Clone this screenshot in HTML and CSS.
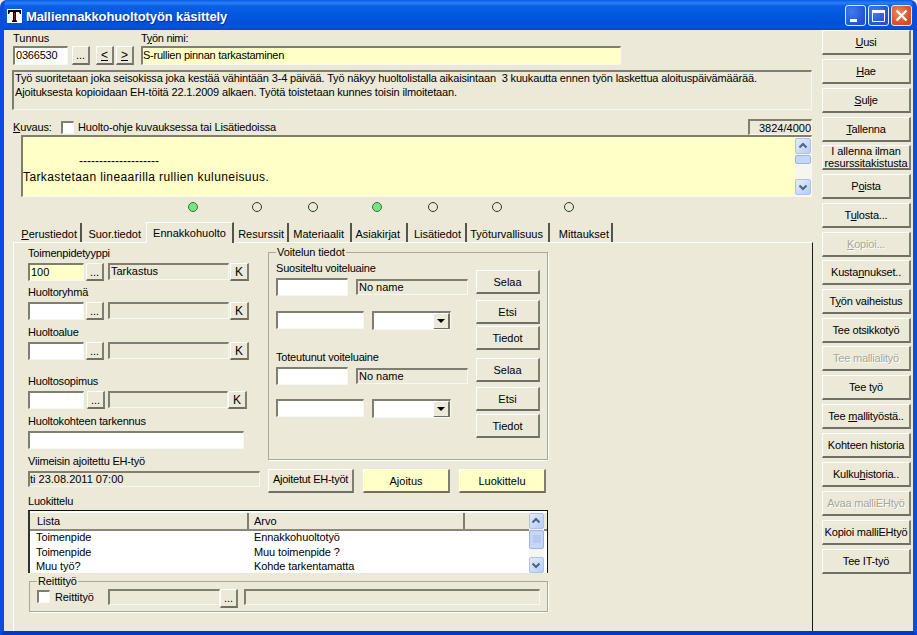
FILE: index.html
```html
<!DOCTYPE html>
<html lang="fi">
<head>
<meta charset="utf-8">
<title>Malliennakkohuoltotyön käsittely</title>
<link rel="stylesheet" href="styles.css">
</head>
<body>
<div class="window">
  <header class="titlebar">
    <svg class="appicon" width="15" height="14" viewBox="0 0 15 14"><rect width="15" height="14" fill="#fff"/><path d="M1 1h13v4h-1l-1-2H9v8l1 1v1H5v-1l1-1V3H3L2 5H1z" fill="#000"/><path d="M7 4h1v7H7z" fill="#8a1a1a"/></svg>
    <span class="title">Malliennakkohuoltotyön käsittely</span>
    <div class="winbtns">
      <span class="wb wb-blue"><svg width="21" height="21" viewBox="0 0 21 21"><rect x="5" y="14" width="7" height="3" fill="#fff"/></svg></span>
      <span class="wb wb-blue"><svg width="21" height="21" viewBox="0 0 21 21"><path d="M4.5 5.5h12v11h-12z" fill="none" stroke="#fff"/><rect x="4" y="5" width="13" height="3" fill="#fff"/></svg></span>
      <span class="wb wb-red"><svg width="21" height="21" viewBox="0 0 21 21"><path d="M5.5 5.5l10 10M15.500 5.500l-10 10" stroke="#fff" stroke-width="2.400" fill="none"/></svg></span>
    </div>
  </header>
  <div class="client">
    <main class="main">
      <section class="top">
        <div class="idlabels"><span class="lab-id">Tunnus</span><span class="lab-name">T<u>y</u>ön nimi:</span></div>
        <div class="idrow">
          <span class="field w-tunnus">0366530</span>
          <span class="btn b-dots">...</span>
          <span class="btn b-nav b-prev"><u>&lt;</u></span>
          <span class="btn b-nav"><u>&gt;</u></span>
          <span class="field yellow w-name">S-rullien pinnan tarkastaminen</span>
        </div>
        <div class="field desc"><div class="desctext">Työ suoritetaan joka seisokissa joka kestää vähintään 3-4 päivää. Työ näkyy huoltolistalla aikaisintaan&nbsp; 3 kuukautta ennen työn laskettua aloituspäivämäärää.<br>Ajoituksesta kopioidaan EH-töitä 22.1.2009 alkaen. Työtä toistetaan kunnes toisin ilmoitetaan.</div></div>
        <div class="kuvrow">
          <span class="kuvlab"><u>K</u>uvaus:</span>
          <span class="check"></span>
          <span class="kuvcheck">Huolto-ohje kuvauksessa tai Lisätiedoissa</span>
          <span class="field counter">3824/4000</span>
        </div>
        <div class="field yellow memo">
          <div class="memotext">
            <div class="dashes">--------------------</div>
            <div>Tarkastetaan lineaarilla rullien kuluneisuus.</div>
          </div>
          <div class="sb">
            <span class="sbb"><svg width="16" height="16" viewBox="0 0 16 16"><path d="M4.500 9.500L8 6l3.500 3.500" stroke="#4d6185" stroke-width="2" fill="none"/></svg></span>
            <span class="sbthumb short"></span>
            <span class="sbtrack"></span>
            <span class="sbb"><svg width="16" height="16" viewBox="0 0 16 16"><path d="M4.500 6.500L8 10l3.500-3.500" stroke="#4d6185" stroke-width="2" fill="none"/></svg></span>
          </div>
        </div>
        <div class="dots">
          <span class="dot on"></span><span class="dot"></span><span class="dot"></span><span class="dot on"></span><span class="dot"></span><span class="dot"></span><span class="dot"></span>
        </div>
      </section>
      <nav class="tabs">
        <span class="tab t1"><u>P</u>erustiedot</span>
        <span class="tab t2">Suor.tiedot</span>
        <span class="tab active t3">Ennakkohuolto</span>
        <span class="tab t4">Resurssit</span>
        <span class="tab t5">Materiaalit</span>
        <span class="tab t6">Asiakirjat</span>
        <span class="tab t7">Lisätiedot</span>
        <span class="tab t8">Työturvallisuus</span>
        <span class="tab t9">Mittaukset</span>
      </nav>
      <section class="panel">
        <div class="panelcols">
          <div class="leftcol">
            <div class="lab">Toimenpidetyyppi</div>
            <div class="frow">
              <span class="field yellow w-code">100</span><span class="btn b-pick">...</span><span class="field w-ro">Tarkastus</span><span class="btn b-k">K</span>
            </div>
            <div class="lab g2">Huoltoryhmä</div>
            <div class="frow">
              <span class="field white w-code"></span><span class="btn b-pick">...</span><span class="field w-ro"></span><span class="btn b-k">K</span>
            </div>
            <div class="lab g2b">Huoltoalue</div>
            <div class="frow">
              <span class="field white w-code"></span><span class="btn b-pick">...</span><span class="field w-ro"></span><span class="btn b-k">K</span>
            </div>
            <div class="lab g3">Huoltosopimus</div>
            <div class="frow shifted">
              <span class="field white w-code"></span><span class="btn b-pick">...</span><span class="field w-ro2"></span><span class="btn b-k">K</span>
            </div>
            <div class="lab g4">Huoltokohteen tarkennus</div>
            <span class="field white w-spec"></span>
            <div class="lab g5">Viimeisin ajoitettu EH-työ</div>
            <span class="field w-last">ti 23.08.2011 07:00</span>
          </div>
          <div class="rightcol">
            <fieldset class="group voitelu">
              <legend>Voitelun tiedot</legend>
              <div class="lubes">
                <div class="lube">
                  <div class="lab">Suositeltu voiteluaine</div>
                  <div class="lrow1"><span class="field white w-lcode"></span><span class="field w-lname">No name</span></div>
                  <div class="lrow2"><span class="field white w-lqty"></span><span class="field white combo"><span class="cbtn"><svg width="8" height="4" viewBox="0 0 8 4"><path d="M0 0h8L4 4z" fill="#000"/></svg></span></span></div>
                </div>
                <div class="lbtns">
                  <span class="btn b-l">Selaa</span><span class="btn b-l b-etsi">Etsi</span><span class="btn b-l b-tied">Tiedot</span>
                </div>
              </div>
              <div class="lubes second">
                <div class="lube">
                  <div class="lab">Toteutunut voiteluaine</div>
                  <div class="lrow1"><span class="field white w-lcode"></span><span class="field w-lname">No name</span></div>
                  <div class="lrow2"><span class="field white w-lqty"></span><span class="field white combo"><span class="cbtn"><svg width="8" height="4" viewBox="0 0 8 4"><path d="M0 0h8L4 4z" fill="#000"/></svg></span></span></div>
                </div>
                <div class="lbtns">
                  <span class="btn b-l">Selaa</span><span class="btn b-l b-etsi">Etsi</span><span class="btn b-l b-tied">Tiedot</span>
                </div>
              </div>
            </fieldset>
            <div class="actions">
              <span class="btn b-a1">Ajoitetut EH-työt</span>
              <span class="btn b-a2">Ajoitus</span>
              <span class="btn b-a2">Luokittelu</span>
            </div>
          </div>
        </div>
        <div class="lab g6">Luokittelu</div>
        <div class="list">
          <div class="lhead"><span class="h1">Lista</span><span class="h2">Arvo</span><span class="h3"></span></div>
          <div class="lbody">
            <div class="rows">
              <div class="lr"><span class="c1">Toimenpide</span><span>Ennakkohuoltotyö</span></div>
              <div class="lr"><span class="c1">Toimenpide</span><span>Muu toimenpide ?</span></div>
              <div class="lr"><span class="c1">Muu työ?</span><span>Kohde tarkentamatta</span></div>
            </div>
          </div>
          <div class="sb lsb">
            <span class="sbb"><svg width="14" height="16" viewBox="0 0 14 16"><path d="M3.500 9.500L7 6l3.500 3.500" stroke="#4d6185" stroke-width="2" fill="none"/></svg></span>
            <span class="sbthumb tall"><svg width="8" height="9" viewBox="0 0 8 9"><path d="M0 1h8M0 3h8M0 5h8M0 7h8" stroke="#a9bde6"/></svg></span>
            <span class="sbtrack"></span>
            <span class="sbb"><svg width="14" height="16" viewBox="0 0 14 16"><path d="M3.500 6.500L7 10l3.500-3.500" stroke="#4d6185" stroke-width="2" fill="none"/></svg></span>
          </div>
        </div>
        <fieldset class="group reitti">
          <legend>Reittityö</legend>
          <div class="rrow">
            <span class="check"></span><span class="rlab">Reittityö</span>
            <span class="field w-r1"></span><span class="btn b-r">...</span><span class="field w-r2"></span>
          </div>
        </fieldset>
      </section>
    </main>
    <aside class="side">
      <span class="btn sbtn"><span><u>U</u>usi</span></span>
      <span class="btn sbtn"><span><u>H</u>ae</span></span>
      <span class="btn sbtn"><span><u>S</u>ulje</span></span>
      <span class="btn sbtn"><span><u>T</u>allenna</span></span>
      <span class="btn sbtn two tight"><span>I allenna ilman<br>resurssitakistusta</span></span>
      <span class="btn sbtn"><span>P<u>o</u>ista</span></span>
      <span class="btn sbtn"><span>T<u>u</u>losta...</span></span>
      <span class="btn sbtn off"><span><u>K</u>opioi...</span></span>
      <span class="btn sbtn tight"><span>Kusta<u>n</u>nukset..</span></span>
      <span class="btn sbtn"><span>T<u>y</u>ön vaiheistus</span></span>
      <span class="btn sbtn"><span>Tee otsikkotyö</span></span>
      <span class="btn sbtn off tight"><span>Tee mallialityö</span></span>
      <span class="btn sbtn"><span>Tee työ</span></span>
      <span class="btn sbtn"><span>Tee <u>m</u>allityöstä..</span></span>
      <span class="btn sbtn"><span>Kohteen historia</span></span>
      <span class="btn sbtn"><span>Kulku<u>h</u>istoria..</span></span>
      <span class="btn sbtn off"><span>Avaa malliEHtyö</span></span>
      <span class="btn sbtn"><span>Kopioi malliEHtyö</span></span>
      <span class="btn sbtn"><span>Tee IT-työ</span></span>
    </aside>
  </div>
</div>
</body>
</html>
```

FILE: styles.css
```css
* { box-sizing: border-box; }
html, body { margin: 0; padding: 0; }
body { width: 917px; height: 635px; overflow: hidden; background: #ece9d8; font-family: "Liberation Sans", Arial, sans-serif; font-size: 11px; color: #000; }
u { text-underline-offset: 1px; }

.window { width: 917px; height: 635px; display: flex; flex-direction: column; background: #0a46d8; border-left: 4px solid #0a4be0; border-right: 4px solid #0a4be0; border-bottom: 4px solid #0339c4; border-radius: 7px 7px 0 0; overflow: hidden; }
.titlebar { height: 30px; flex: none; margin: 0 -4px; padding: 0 5px 0 7px; display: flex; align-items: center; background: linear-gradient(#0a5ae8 0, #2a80f4 3px, #0a5fe6 6px, #0358e0 14px, #0250d8 22px, #0350e0 27px, #0a46c8 30px); }
.appicon { flex: none; margin-top: 1px; }
.title { margin: 2px 0 0 4px; color: #fff; font-size: 13px; font-weight: bold; letter-spacing: -0.100px; text-shadow: 1px 1px 0 #0a2f90; white-space: nowrap; }
.winbtns { margin-left: auto; display: flex; gap: 2px; margin-top: 1px; }
.wb { width: 21px; height: 21px; border: 1px solid #e4ecfb; border-radius: 3px; display: block; overflow: hidden; }
.wb svg { display: block; margin: -1px; }
.wb-blue { background: radial-gradient(circle at 30% 30%, #3f7df0, #2450cf 75%); }
.wb-red { background: radial-gradient(circle at 35% 35%, #ec8860, #d8481c 75%); }

.client { flex: 1; display: flex; background: #ece9d8; min-height: 0; }
.main { width: 809px; flex: none; display: flex; flex-direction: column; }
.top { padding-left: 9px; flex: none; height: 192px; }

.field { display: block; flex: none; background: #ece9d8; border-top: 2px solid #807e70; border-left: 2px solid #807e70; border-bottom: 1px solid #f8f7f0; border-right: 1px solid #f8f7f0; padding: 0 1px; font-size: 11px; line-height: 13px; white-space: nowrap; overflow: hidden; }
.yellow { background: #ffffc8; }
.white { background: #fff; }

.btn { display: flex; align-items: center; justify-content: center; flex: none; background: #ece9d8; border-top: 1px solid #fff; border-left: 1px solid #fff; border-right: 2px solid #807e70; border-bottom: 2px solid #716f64; font-size: 11px; white-space: nowrap; }

.idlabels { height: 16px; display: flex; font-size: 11px; line-height: 14px; padding-top: 1px; }
.lab-id { width: 128px; }
.lab-name { letter-spacing: -0.300px; }
.idrow { display: flex; height: 19px; }
.w-tunnus { width: 55px; height: 19px; background: #fff; line-height: 15px; letter-spacing: -0.200px; }
.b-dots { width: 18px; height: 19px; margin-left: 4px; }
.b-nav { width: 18px; height: 19px; margin-left: 2px; font-size: 12px; }
.b-prev { margin-left: 6px; }
.w-name { width: 480px; height: 19px; margin-left: 7px; line-height: 15px; letter-spacing: -0.250px; padding-left: 0; }
.desc { width: 800px; height: 40px; margin: 5px 0 0 -1px; font-size: 11px; line-height: 14px; padding: 0 1px; white-space: nowrap; }
.desctext { margin-top: -1px; letter-spacing: -0.150px; }
.kuvrow { display: flex; align-items: center; width: 799px; height: 16px; margin-top: 9px; font-size: 11px; letter-spacing: -0.150px; }
.kuvlab { width: 48px; }
.check { display: block; flex: none; width: 13px; height: 13px; background: #fff; border-top: 2px solid #807e70; border-left: 2px solid #807e70; border-bottom: 1px solid #f8f7f0; border-right: 1px solid #f8f7f0; margin-right: 4px; }
.kuvcheck { margin-top: -1px; }
.counter { margin-left: auto; width: 64px; height: 16px; text-align: right; padding: 0; line-height: 14px; font-size: 11px; letter-spacing: 0; }
.memo { width: 791px; height: 62px; margin-left: 8px; display: flex; padding: 0; }
.memotext { flex: 1; font-size: 12px; letter-spacing: 0.400px; line-height: 16px; padding: 16px 0 0 0; white-space: nowrap; }
.dashes { padding-left: 56px; letter-spacing: 0; }
.sb { width: 16px; flex: none; display: flex; flex-direction: column; background: #f6f5f0; margin-top: 1px; margin-bottom: 1px; }
.sbb { display: block; height: 16px; flex: none; background: linear-gradient(135deg, #e4ecfc, #b6ccf6); border: 1px solid #b0c2ea; border-radius: 2px; }
.sbb svg { display: block; margin: -1px 0 0 -1px; }
.sbthumb { display: flex; align-items: center; justify-content: center; flex: none; background: #c6d6f8; border: 1px solid #9cb6e6; border-radius: 2px; }
.sbthumb.short { height: 9px; margin-top: 1px; }
.sbthumb.tall { height: 19px; margin-top: 1px; }
.sbtrack { flex: 1; }
.dots { display: flex; height: 12px; margin-top: 5px; }
.dot { display: block; width: 10px; height: 10px; border-radius: 50%; border: 1px solid #2a3a2a; background: #ece9d8; flex: none; }
.dot.on { background: #7fe08a; border-color: #2f7a3a; }
.dot:nth-child(1) { margin-left: 175px; }
.dot:nth-child(2) { margin-left: 54px; }
.dot:nth-child(3) { margin-left: 46px; }
.dot:nth-child(4) { margin-left: 54px; }
.dot:nth-child(5) { margin-left: 46px; }
.dot:nth-child(6) { margin-left: 54px; }
.dot:nth-child(7) { margin-left: 62px; }

.tabs { height: 20px; flex: none; display: flex; align-items: flex-end; padding-left: 11px; font-size: 11px; position: relative; z-index: 1; }
.tab { display: flex; align-items: center; justify-content: flex-end; height: 19px; padding-top: 3px; border-right: 2px solid #555448; white-space: nowrap; flex: none; }
.tab.t1 { width: 67px; padding-right: 3px; }
.tab.t2 { width: 64px; border-right: 0; padding-right: 5px; }
.tab.active { width: 88px; height: 21px; background: #ece9d8; border-top: 1px solid #fff; border-left: 1px solid #fff; padding: 0; justify-content: center; margin-bottom: -1px; }
.tab.t4 { width: 55px; padding-right: 3px; }
.tab.t5 { width: 63px; padding-right: 6px; }
.tab.t6 { width: 56px; padding-right: 6px; }
.tab.t7 { width: 59px; padding-right: 4px; }
.tab.t8 { width: 83px; padding-right: 5px; }
.tab.t9 { width: 63px; padding-right: 2px; }

.panel { flex: 1; min-height: 0; border-top: 1px solid #fff; border-left: 1px solid #fff; border-right: 1px solid #1a1a14; margin-left: 9px; padding-left: 14px; }
.panelcols { display: flex; height: 251px; }
.leftcol { width: 240px; flex: none; padding-top: 3px; }
.lab { font-size: 11px; line-height: 14px; height: 14px; white-space: nowrap; letter-spacing: -0.200px; }
.frow { display: flex; height: 18px; margin-top: 3px; }
.frow .w-code { width: 56px; height: 18px; line-height: 15px; }
.b-pick { width: 18px; height: 18px; margin-left: 2px; }
.w-ro { width: 121px; height: 17px; margin-left: 4px; }
.w-ro2 { width: 120px; height: 17px; margin-left: 3px; }
.b-k { width: 19px; height: 18px; margin-left: 1px; font-size: 12px; }
.frow.shifted .b-pick { margin-left: 3px; }
.frow.shifted .b-k { margin-left: 0; }
.g2 { margin-top: 4px; }
.g2b { margin-top: 5px; }
.g3 { margin-top: 14px; }
.g4 { margin-top: 5px; }
.g5 { margin-top: 5px; }
.w-spec { width: 216px; height: 18px; margin-top: 3px; }
.w-last { width: 232px; height: 16px; margin-top: 3px; padding-left: 0; line-height: 13px; }

.rightcol { flex: none; width: 281px; }
.group { margin: 0; padding: 0; border: 1px solid #aca899; box-shadow: 1px 1px 0 #fff; min-width: 0; }
.group legend { padding: 0 1px; margin-left: 0; font-size: 11px; line-height: 13px; letter-spacing: -0.100px; }
.voitelu { height: 214px; width: 280px; margin-top: 3px; padding: 0 7px 0 7px; }
.lubes { display: flex; justify-content: space-between; }
.lubes.second { margin-top: -2px; }
.lube { width: 192px; padding-top: 2px; }
.lrow1 { display: flex; height: 18px; margin-top: 3px; align-items: flex-start; }
.w-lcode { width: 72px; height: 18px; }
.w-lname { width: 112px; height: 16px; margin: 1px 0 0 8px; }
.lrow2 { display: flex; margin-top: 15px; height: 19px; align-items: flex-start; }
.second .lrow2 { margin-top: 14px; }
.w-lqty { width: 88px; height: 18px; }
.combo { width: 79px; height: 19px; margin-left: 8px; padding: 0; display: flex; justify-content: flex-end; }
.cbtn { display: flex; width: 17px; height: 17px; align-items: center; justify-content: center; background: #ece9d8; border-top: 1px solid #fff; border-left: 1px solid #fff; border-right: 2px solid #716f64; border-bottom: 2px solid #716f64; }
.lbtns { display: flex; flex-direction: column; width: 64px; padding-top: 11px; }
.second .lbtns { padding-top: 10px; }
.b-l { width: 64px; height: 24px; }
.b-etsi { margin-top: 6px; }
.b-tied { margin-top: 2px; }
.second .b-etsi { margin-top: 5px; }
.second .b-tied { margin-top: 3px; }
.actions { display: flex; margin-top: 9px; height: 24px; }
.b-a1 { width: 86px; height: 24px; padding-bottom: 3px; letter-spacing: -0.250px; }
.b-a2 { width: 87px; height: 24px; margin-left: 9px; background: #ffffc8; }

.g6 { margin-top: 0; }
.list { width: 520px; height: 63px; margin-top: 2px; background: #fff; border-top: 1px solid #111; border-left: 2px solid #333; border-right: 1px solid #111; position: relative; display: flex; flex-direction: column; }
.lhead { display: flex; height: 19px; flex: none; background: #ece9d8; border-top: 1px solid #fff; border-bottom: 2px solid #8a8878; padding-right: 16px; font-size: 11px; line-height: 17px; margin-top: 1px; }
.h1, .h2, .h3 { display: block; border-right: 2px solid #807e70; }
.h1 { width: 219px; padding-left: 7px; }
.h2 { width: 216px; padding-left: 5px; }
.h3 { flex: 1; border-right: 0; }
.lbody { flex: 1; overflow: hidden; }
.rows { margin-top: -1px; padding: 0 0 0 6px; font-size: 11px; line-height: 14px; letter-spacing: -0.100px; }
.lr { display: flex; height: 14px; }
.lr:first-child { height: 15px; }
.c1 { width: 218px; }
.lsb { position: absolute; right: 3px; top: 2px; bottom: 0; width: 15px; margin: 0; }
.reitti { width: 519px; height: 37px; margin: 2px 0 0 1px; padding: 0 0 0 7px; }
.rrow { display: flex; align-items: flex-start; padding-top: 1px; }
.rrow .check { margin-top: 1px; margin-right: 0; }
.rlab { width: 58px; padding-left: 5px; font-size: 11px; line-height: 14px; margin-top: 1px; letter-spacing: -0.100px; }
.w-r1 { width: 112px; height: 16px; }
.b-r { width: 18px; height: 19px; }
.w-r2 { width: 296px; height: 16px; margin-left: 6px; }

.side { flex: 1; padding: 0 0 0 9px; display: flex; flex-direction: column; gap: 4px; }
.sbtn { width: 89px; height: 25px; font-size: 11px; text-align: center; line-height: 13px; letter-spacing: -0.200px; }
.sbtn.two { line-height: 12px; letter-spacing: -0.100px; }
.sbtn.tight { margin-top: -1px; }
.sbtn.off { color: #a8a698; text-shadow: 1px 1px 0 #fff; }
```
